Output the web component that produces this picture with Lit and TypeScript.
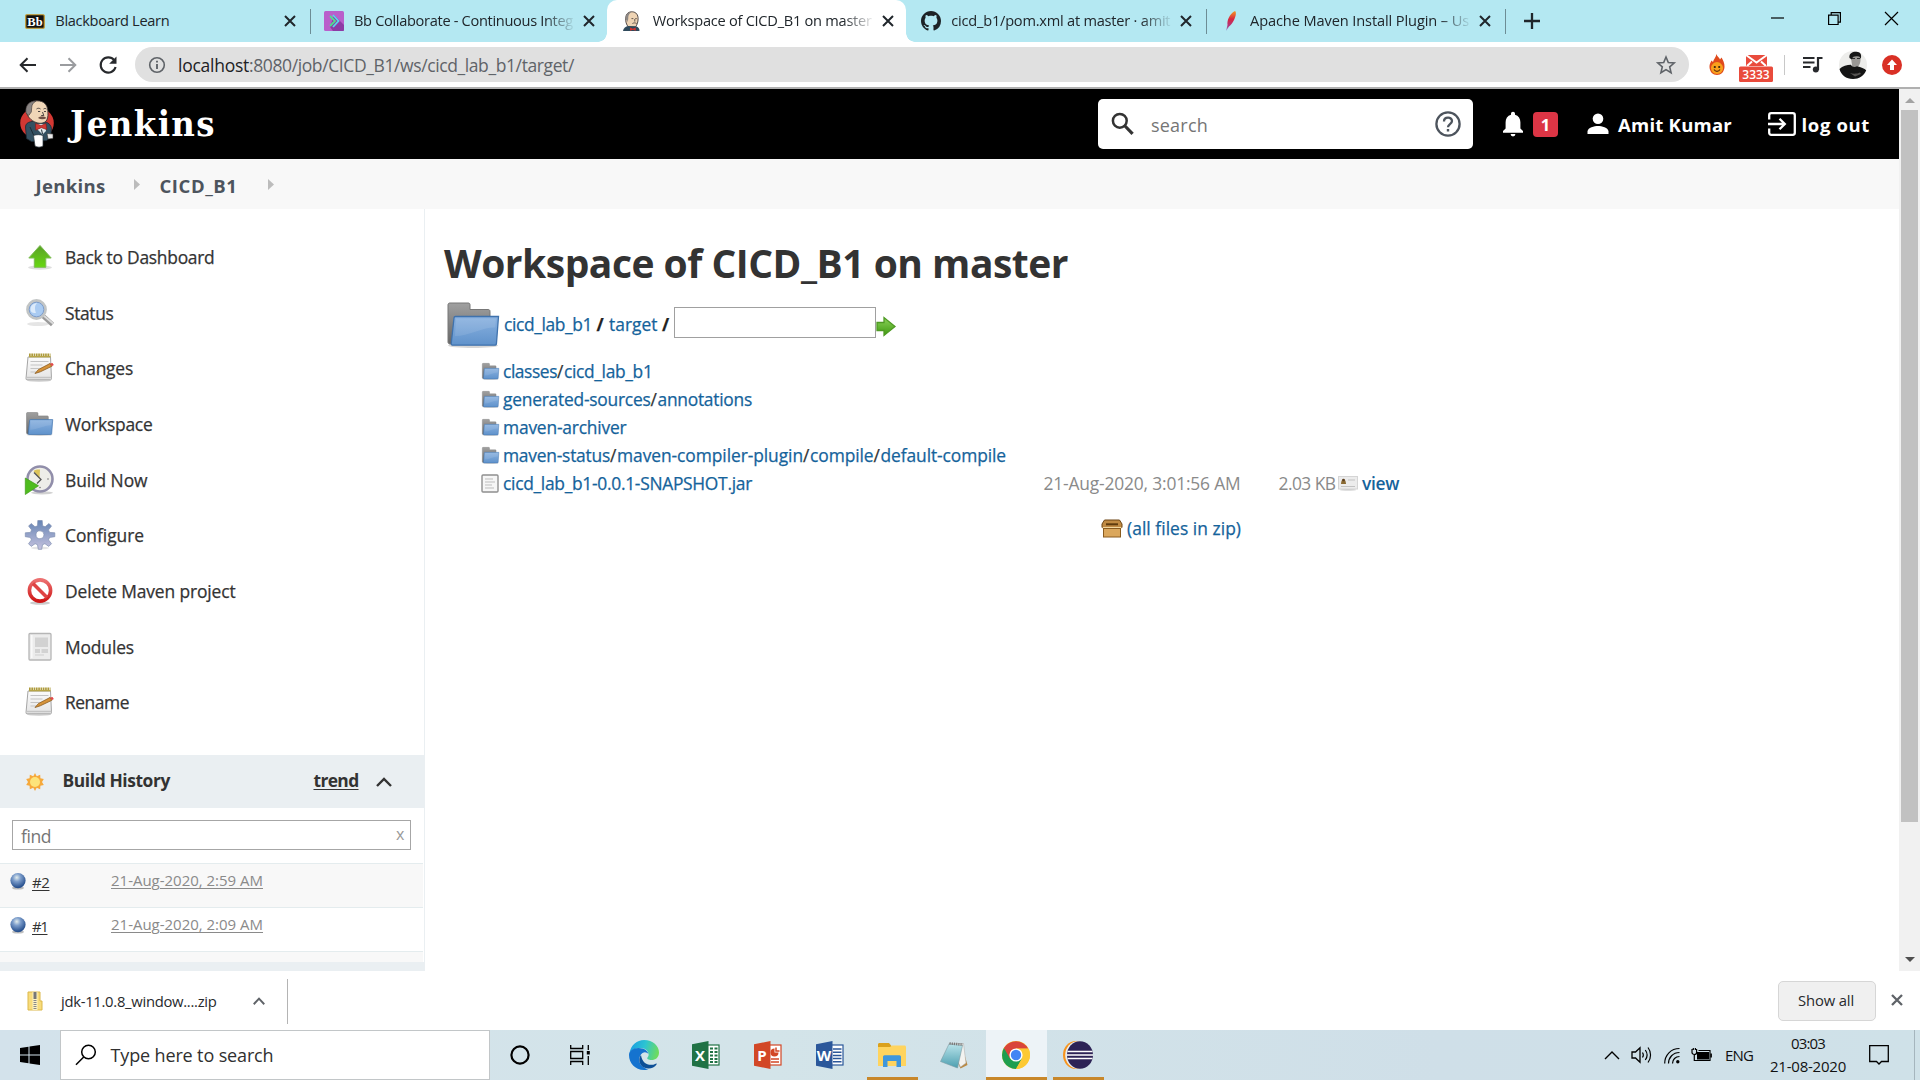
import { LitElement, html, css, svg, nothing } from "lit";
import { customElement, property } from "lit/decorators.js";
import { classMap } from "lit/directives/class-map.js";

/* Single line of text spaced out to an exact width. */
@customElement("fit-text")
class FitText extends LitElement {
  @property() text = "";
  @property({ type: Number }) w = 0;
  static styles = css`
    :host { display: inline-block; white-space: pre; }
    .line { display: inline-block; text-decoration: inherit; text-underline-offset: inherit; }
  `;
  firstUpdated() {
    const line = this.renderRoot.querySelector(".line") as HTMLElement;
    const gap = (this.w - line.getBoundingClientRect().width) / this.text.length;
    line.style.letterSpacing = `${gap.toFixed(3)}px`;
    this.style.width = `${this.w}px`;
  }
  render() {
    return html`<span class="line">${this.text}</span>`;
  }
}

const t = (text: string, w: number, cls = "") => html`<fit-text class=${cls} .text=${text} .w=${w}></fit-text>`;
const icon = (w: number, h: number, body: unknown, vb = `0 0 ${w} ${h}`) =>
  html`<svg width=${w} height=${h} viewBox=${vb} preserveAspectRatio="none">${body}</svg>`;

/* ---------- pictograms ---------- */
const cross = (s: number, color: string, sw: number) =>
  icon(s, s, svg`<path d="M1 1 11 11M11 1 1 11" fill="none" stroke=${color} stroke-width=${sw}/>`, "0 0 12 12");

const butlerHead = svg`
  <path d="M4 7C4 2 8 .6 11 .8c4 .3 6 3 6 7 0 3-1 6-2.600 8L7 16C4.500 14 3.500 10 4 7z" fill="#efd4b4" stroke="#3c3432" stroke-width=".9"/>
  <path d="M4 8c-.5-4 2-7 6-7.200C7 3 6.500 5 6.600 8l-1 3z" fill="#8b8785"/>
  <path d="M10 7.600h2M14 7.600h1.600M13.500 8v2.600M11 12.500c1.500-.8 3-.8 4.500 0" stroke="#3c3432" stroke-width=".8" fill="none"/>
  <path d="M1 20c.5-3 3-4.500 5.500-5l9 .5c2 .5 3 2.500 3 4.500z" fill="#2f4a5c"/>
  <path d="M8.500 16.500l3 1.200 3-1.200v3.200l-3-1-3 1z" fill="#d6322d"/>`;

const favBb = icon(20, 15, svg`<rect x=".75" y=".75" width="18.500" height="13.500" rx="1" fill="#111" stroke="#c99a2c" stroke-width="1.200"/><text x="10" y="12" text-anchor="middle" class="bb">Bb</text>`);
const favCollab = icon(20, 20, svg`<rect width="20" height="20" rx="1.500" fill="#b95fcb"/><path d="M10 4l10 10v4.500c0 1-.5 1.500-1.500 1.500H9l-3-4z" fill="#8d3ba5"/><path d="M6 5l5 5-5 5" fill="none" stroke="#4fe08c" stroke-width="1.800"/><path d="M9 4l5.500 6L9 16" fill="none" stroke="#58d6ee" stroke-width="1.800"/>`);
const favButler = icon(18, 20, butlerHead, "0 0 19 20");
const favGithub = icon(20, 20, svg`<path fill="#1d2226" d="M8 0C3.580 0 0 3.580 0 8c0 3.540 2.290 6.530 5.470 7.590.4.070.550-.170.550-.380 0-.190-.010-.820-.010-1.490-2.010.370-2.530-.490-2.690-.940-.090-.230-.480-.940-.820-1.130-.280-.150-.680-.520-.010-.530.630-.010 1.080.580 1.230.820.720 1.210 1.870.870 2.330.660.070-.520.280-.870.510-1.070-1.780-.2-3.640-.890-3.640-3.950 0-.870.310-1.590.820-2.150-.080-.2-.360-1.020.080-2.120 0 0 .670-.210 2.200.820.640-.180 1.320-.270 2-.270s1.360.090 2 .270c1.530-1.040 2.200-.820 2.200-.820.440 1.100.160 1.920.080 2.120.510.560.820 1.270.820 2.150 0 3.070-1.870 3.750-3.650 3.950.290.250.540.730.540 1.480 0 1.070-.010 1.930-.010 2.200 0 .210.150.460.550.380A8.010 8.010 0 0 0 16 8c0-4.420-3.580-8-8-8z"/>`, "0 0 16 16");
const favFeather = icon(20, 20, svg`<defs><linearGradient id="fe" x1="0" y1="0" x2="0" y2="1"><stop offset="0" stop-color="#f59a23"/><stop offset=".4" stop-color="#d8263f"/><stop offset=".75" stop-color="#b0367f"/><stop offset="1" stop-color="#8c9fd8"/></linearGradient></defs><path d="M15 0c1.500 1 1 5-1 9-1.400 2.800-3 5-5 6.500L6 20l1.500-6C7 10 9 3 15 0z" fill="url(#fe)"/>`);

const fwd = (color: string) => icon(18, 18, svg`<path d="M1 9h15M9.500 2.200 16.300 9l-6.800 6.800" fill="none" stroke=${color} stroke-width="2"/>`);
const back = icon(18, 18, svg`<path d="M17 9H2M8.500 2.200 1.700 9l6.800 6.800" fill="none" stroke="#27292c" stroke-width="2"/>`);
const reload = icon(20, 20, svg`<path d="M16.200 5.200A7.600 7.600 0 1 0 17.600 12" fill="none" stroke="#27292c" stroke-width="2.100"/><path d="M18.500 1.500v7.300h-7.300z" fill="#27292c"/>`);
const info = icon(18, 18, svg`<circle cx="9" cy="9" r="7.300" fill="none" stroke="#5f6368" stroke-width="1.600"/><path d="M9 8v5M9 4.800v1.800" stroke="#5f6368" stroke-width="1.900"/>`);
const star = icon(20, 20, svg`<path d="M10 2l2.300 5.500 5.900.5-4.500 3.900 1.400 5.800L10 14.600l-5.100 3.100 1.400-5.800L1.800 8l5.900-.5z" fill="none" stroke="#5f6368" stroke-width="1.600"/>`);
const flame = icon(16, 22, svg`<path d="M7.500 0c.5 2.500 3 3.500 3.500 5.500l1.500-2c1.500 2.500 3.200 5.500 3 9.500-.3 5-3.500 8-7.500 8S.7 18 .5 13c-.1-3 1-4.500 2-6.500L4 8c.5-3 3-4.500 3.500-8z" fill="#e04a1c"/><path d="M2 14c0-3 3-6 6-6s6 3 6 6-2.500 6-6 6-6-3-6-6z" fill="#f9a11c"/><circle cx="5.800" cy="13" r="1.100" fill="#33200e"/><circle cx="10.200" cy="13" r="1.100" fill="#33200e"/><path d="M5 15.500c1.500 2.500 4.500 2.500 6 0" stroke="#5b2a0d" stroke-width="1.200" fill="none"/>`);
const mail = icon(34, 27, svg`<path d="M7 0h21v11H7z" fill="#e94b3c"/><path d="M7 0l10.500 7.500L28 0M8 11l5-4.500M27 11l-5-4.500" fill="none" stroke="#fff" stroke-width="2"/><rect y="11.500" width="34" height="15.500" rx="1.500" fill="#e94b3c"/><text x="17" y="24" text-anchor="middle" class="count">3333</text>`);
const playlist = icon(21, 17, svg`<path d="M1 2h11.500M1 6.500h11.500M1 11h7.500" stroke="#27292c" stroke-width="2"/><path d="M16 14V2h4.500" stroke="#27292c" stroke-width="2.200" fill="none"/><circle cx="13.800" cy="13.600" r="3" fill="#27292c"/>`);
const avatar = icon(28, 28, svg`<circle cx="14" cy="14" r="14" fill="#ededeb"/><path d="M12 6.500c0-2 9-2 9.500-.5.5 5-1 9.500-4 10.500v2l-5-1.500c1-2 .5-3 .2-5z" fill="#9a9895"/><path d="M10.500 7c-1-5 3.500-6.500 7-6.300 3.500.1 5.500 2.500 4.300 7-.8-2-2-2.700-4-2.500-2.500.2-4.300.3-5 3.300z" fill="#171717"/><path d="M13 7.500h3M18 7.500h3" stroke="#2a2a2a" stroke-width="1"/><path d="M.5 18c3-3 7.500-4 11.500-4.200 1 2.200 3.500 3 6 1.500 4 .8 7.500 2.200 9.200 4C25 25 20 28 14 28 7 28 2 24 .5 18z" fill="#141414"/><path d="M11 22c3 1 7 1 10-.5l1 1.500-6 2.500z" fill="#565452"/>`);
const upRed = icon(20, 20, svg`<circle cx="10" cy="10" r="10" fill="#d93025"/><path d="M10 4.500l5 5.500h-3v5H8v-5H5z" fill="#fff"/>`);

const butler = icon(34, 48, svg`
  <ellipse cx="17" cy="23" rx="16.800" ry="15.500" fill="#d33833"/>
  <path d="M5.500 27c0-3 2-4.500 5-5.200l4-.8 11 1c3.500.800 5.500 3.500 6 6.500l-1 9-4 3-15 1-5-3z" fill="#335061" stroke="#1d2b35" stroke-width=".8"/>
  <path d="M16 24h9l1 7-3.500 3.500L17 29z" fill="#dfe8ec"/>
  <path d="M6.500 12C5.500 5 10 .9 17 .8c7 0 10.300 4 10.800 9.500.3 4 .4 7-1 9.700-1.700 3-5.500 3.800-9 3-4.500-1-10.300-5-11.300-11z" fill="#f0d6b7" stroke="#3b3434" stroke-width=".9"/>
  <path d="M6 13C5 6 8.500 1.200 16 .9c-3 2-4.300 4-4.300 6.800L11.300 12l-2.500 3.500z" fill="#8a8583" stroke="#3b3434" stroke-width=".6"/>
  <path d="M16.500 9c1.200-1 2.700-1 4 0M23.500 9c1-.7 2-.7 3 0M18 11.500h2.200M24 11.500h2M22.500 12l1.300 3.500h-2.600" stroke="#3b3434" stroke-width=".9" fill="none"/>
  <path d="M18 18c2.300-2 6-1.800 8.500 0-2.500 1.700-6 1.700-8.500 0z" fill="#6e4f44"/>
  <path d="M15.500 23.500l5.500 2 5-2 .8 6-5.500-1.800-5.500 2.500z" fill="#d33833" stroke="#7d1814" stroke-width=".6"/>
  <path d="M10 27l4 9M21.500 29.500l1 4.500" stroke="#1d2b35" stroke-width="1"/>
  <path d="M13.500 35.500c3-1.200 7-1 9.500 0v10.500c-2 1.500-6 1.500-8 0z" fill="#fff" stroke="#27323a" stroke-width=".7"/>
  <path d="M27 33.500l6 .5v4.500l-5 .5z" fill="#e9e9e9" stroke="#333" stroke-width=".6"/>`);

const lens = icon(24, 24, svg`<circle cx="8.800" cy="8.800" r="6.900" fill="none" stroke="#333" stroke-width="2.500"/><path d="M14 14l7.600 7.800" stroke="#333" stroke-width="3.200"/>`);
const help = icon(26, 26, svg`<circle cx="13" cy="13" r="11.600" fill="none" stroke="#4d545d" stroke-width="2.300"/><path d="M9 10.500c0-5 8-5 8-.4 0 3-4 3.200-4 6.100" fill="none" stroke="#4d545d" stroke-width="2.300"/><rect x="11.800" y="18" width="2.400" height="2.500" fill="#4d545d"/>`);
const bell = icon(22, 26, svg`<path d="M11 .8c1.200 0 2 .9 2 2v.9c3.600 1 5.400 4 5.400 7.600v6.200L21 20v1.700H1V20l2.600-2.500v-6.200C3.600 7.700 5.400 4.700 9 3.700v-.9c0-1.100.8-2 2-2zM8.600 23h4.800a2.400 2.400 0 0 1-4.800 0z" fill="#fff"/>`);
const person = icon(22, 22, svg`<circle cx="11" cy="5.800" r="5.300" fill="#fff"/><path d="M.5 21v-2.600c0-3.600 7-5.400 10.500-5.400s10.500 1.800 10.500 5.400V21z" fill="#fff"/>`);
const logout = icon(28, 24, svg`<path d="M1.200 7.500V3.200c0-1 .8-2 2-2h21.600c1.200 0 2 1 2 2v17.600c0 1-.8 2-2 2H3.200c-1.200 0-2-1-2-2v-4.300" fill="none" stroke="#fff" stroke-width="2.300"/><path d="M0 12h16M11.500 6.800 16.800 12l-5.300 5.200" fill="none" stroke="#fff" stroke-width="2.300"/>`);
const crumb = icon(6, 11, svg`<path d="M0 0l6 5.500L0 11z" fill="#bcbcbc"/>`);

const grad = (id: string, a: string, b: string) => svg`<linearGradient id=${id} x1="0" y1="0" x2="0" y2="1"><stop offset="0" stop-color=${a}/><stop offset="1" stop-color=${b}/></linearGradient>`;
const folderBody = svg`<defs>${grad("fb", "#8bb2e0", "#5f92cb")}${grad("fg", "#a0a0a0", "#666")}</defs>
  <ellipse cx="26" cy="43.500" rx="25" ry="2.500" fill="#000" opacity=".16"/>
  <path d="M1 3c0-1.500.8-2 2-2h18c1.500 0 2 .6 2 2v4.500h18c1.200 0 2 .6 2 1.800V42H3c-1.200 0-2-.8-2-2z" fill="url(#fg)" stroke="#777" stroke-width="1"/>
  <path d="M8.500 14.500h43L49.500 41c0 1.500-.8 2.200-2 2.200H6c-1.400 0-1.900-.9-1.700-2.200L7 16c0-1 .5-1.500 1.500-1.500z" fill="url(#fb)" stroke="#3f72ad" stroke-width="1.300"/>
  <path d="M9 16.500h40l-.8 9C36 25 22 34 8 34z" fill="#fff" opacity=".1"/>`;
const folder = (w: number, h: number) => icon(w, h, folderBody, "0 0 52 46");

const icUp = icon(30, 30, svg`<defs>${grad("gu", "#5aa02a", "#67d810")}</defs><ellipse cx="15" cy="25.500" rx="12" ry="2.200" fill="#000" opacity=".13"/><path d="M15 3.500 26.200 16h-5.400v9.300H9.300V16H3.800z" fill="url(#gu)" stroke="#7cbc54" stroke-width="1"/>`);
const icStatus = icon(30, 30, svg`<ellipse cx="13" cy="26" rx="11" ry="2" fill="#000" opacity=".1"/><path d="M18 18 27.500 26.500" stroke="#9a9a9a" stroke-width="4.600"/><path d="M18.500 17.500 28 25.500" stroke="#dcdcdc" stroke-width="1.800"/><circle cx="11.500" cy="11.500" r="9" fill="#a9cbf2" stroke="#c2c5c5" stroke-width="2.800"/><circle cx="11.500" cy="11.500" r="7.300" fill="none" stroke="#7f9dc9" stroke-width="1"/><path d="M5.500 11.500c0-4 3-6.500 7-6.200-3 1-3 6-1.500 9.500-3 .7-5.500-.5-5.500-3.300z" fill="#dcebfb"/>`);
const icPad = icon(30, 30, svg`<defs>${grad("gp", "#fbfbfb", "#e4e4e4")}</defs><ellipse cx="14" cy="27.500" rx="12" ry="1.500" fill="#000" opacity=".15"/><path d="M3 4h22.500l1 21.500c0 .8-.3 1.300-1 1.300H2c-.8 0-1-.5-1-1.300z" fill="url(#gp)" stroke="#a5a5a5" stroke-width="1"/><path d="M1.500 24.500h25" stroke="#c4c4c4" stroke-width="1.500"/><path d="M4 2.300h21.500" stroke="#ad9a3b" stroke-width="3.400" stroke-dasharray="1.700 .6"/><path d="M4 3.700h21.500" stroke="#b7a547" stroke-width="1.400"/><path d="M5.500 8.500h18M5.500 12h12M5.500 15.500h9M5.500 19h6" stroke="#c3c3c3" stroke-width="1.200"/><path d="M10 20.500l3.500-4L25 10.500l1.800 2.800-11.500 5.500z" fill="#d6933a" stroke="#8a5a1d" stroke-width=".8"/><path d="M25 10.500l2.500-.6 1.300 2-2 1.400z" fill="#e24a4a"/>`);
const icBuild = icon(30, 30, svg`<ellipse cx="17" cy="27.800" rx="11" ry="1.600" fill="#000" opacity=".18"/><circle cx="15" cy="14" r="12.500" fill="#eeeee9" stroke="#918eaa" stroke-width="2.600"/><path d="M14.500 13.500 8.500 6c2-1.500 4.500-1.800 6.500-1.500z" fill="#dcc45a"/><path d="M9 7.500l7 7-4 4" fill="none" stroke="#555" stroke-width="1.300"/><circle cx="23" cy="14" r=".8" fill="#777"/><circle cx="15" cy="22.500" r=".8" fill="#777"/><path d="M.3 13 13.500 20.800.3 29.500z" fill="#4fbc1e" stroke="#3e9a18" stroke-width=".7"/>`);
const icGear = icon(30, 30, svg`<defs>${grad("gg", "#6584b4", "#c5c2de")}</defs><ellipse cx="15" cy="28" rx="9" ry="1.500" fill="#000" opacity=".1"/><path fill="url(#gg)" stroke="#7f8fb2" stroke-width=".7" fill-rule="evenodd" d="M12.800.5h4.400l.4 5.300 2.500 1L24 3.500l2.500 2.600-3 3.800 1.100 2.500 5.200.4v3.900l-5.200.7-1.100 2.500 3 3.800-2.700 2.700-3.900-2.700-2.400 1-.8 4.600h-3.400l-.8-4.600-2.400-1-3.900 2.700-2.700-2.700 3-3.800-1.100-2.500L.3 16.700v-3.900l5.200-.4 1.100-2.500-3-3.800L6.200 3.500l3.800 3.300 2.500-1zM15 10.800a4 4 0 1 0 0 8 4 4 0 1 0 0-8z"/>`);
const icDelete = icon(30, 30, svg`<defs>${grad("gd", "#ec7070", "#cf1717")}</defs><ellipse cx="15" cy="27" rx="10" ry="1.700" fill="#000" opacity=".2"/><circle cx="15" cy="14.500" r="10.600" fill="#fff" fill-opacity=".7" stroke="url(#gd)" stroke-width="3.600"/><path d="M8 7.500l14 14" stroke="#df4343" stroke-width="3.600"/>`);
const icModules = icon(30, 30, svg`<rect x="4" y="1.500" width="22" height="26.500" rx="1" fill="#ececec" stroke="#b6b6b6" stroke-width="1.300"/><path d="M10 5.500h13v9.500H10zM10 17h5v4h-5zM16.500 17H23v4h-6.500z" fill="#d2d2d2"/><path d="M10 23h9" stroke="#cfcfcf"/><path d="M6.800 3v23" stroke="#fafafa" stroke-width="1.500"/>`);
const icWork = html`<span class="wk">${folder(27, 24)}</span>`;

const sun = icon(18, 18, svg`<path d="M9 0l1.700 3.200L14.200 1.800l.2 3.400 3.400.9L16 9l1.800 2.900-3.400.9-.2 3.400-3.500-1.400L9 18l-1.700-3.200-3.500 1.400-.2-3.400-3.400-.9L2 9 .2 6.100l3.400-.9.2-3.400 3.500 1.400z" fill="#f6a93b"/><circle cx="9" cy="9" r="5" fill="#fde47a"/>`);
const ball = icon(18, 18, svg`<defs><radialGradient id="ba" cx=".42" cy=".3" r=".65"><stop offset="0" stop-color="#e2ecec"/><stop offset=".4" stop-color="#7c9dcb"/><stop offset="1" stop-color="#2a528f"/></radialGradient></defs><ellipse cx="9" cy="16" rx="6" ry="1.600" fill="#000" opacity=".25"/><circle cx="9" cy="8.600" r="7.600" fill="url(#ba)"/>`);
const go = icon(20, 21, svg`<defs>${grad("go", "#8cd25a", "#3f9a10")}</defs><path d="M1 6.500h7V1.500L19 10.500 8 19.500v-5H1z" fill="url(#go)" stroke="#4f9a24" stroke-width="1.300"/>`);
const doc = icon(18, 19, svg`<rect x="1" y="1" width="16" height="17" rx="1" fill="#f6f6f6" stroke="#8f8f8f" stroke-width="1.400"/><path d="M4 5h8M4 8h10M4 11h7M4 14h9" stroke="#bdbdbd"/>`);
const viewIc = icon(20, 15, svg`<rect x=".5" y=".5" width="19" height="12.500" fill="#ececec" stroke="#d5d5d5"/><ellipse cx="10" cy="14" rx="8" ry="1" fill="#000" opacity=".12"/><path d="M3 8c0-2 1-5 2.500-5S8 6 8 8z" fill="#8a6a33"/><circle cx="5.500" cy="4" r="1.300" fill="#5c3e20"/><path d="M10 4h7M3 10.500h14" stroke="#c2c2c2" stroke-width="1.200"/>`);
const zipBox = icon(20, 19, svg`<path d="M2.500 1h15L20 5v3.500H0V5z" fill="#c08a42" stroke="#6d4514" stroke-width="1"/><path d="M4 5.300h12" stroke="#5f3b0e" stroke-width="2"/><path d="M.6 8h18.800v2H.6z" fill="#f3d7a0"/><rect x="1.500" y="9.500" width="17" height="8.500" fill="#dba75c" stroke="#8a5b1e"/>`);
const chevron = (w: number, h: number, c: string, sw: number) => icon(w, h, svg`<path d="M1 9 8 2l7 7" fill="none" stroke=${c} stroke-width=${sw}/>`, "0 0 16 10");

const zipFile = icon(16, 20, svg`<path d="M1 1h12v9h2v9H1z" fill="#f8dc7c" stroke="#dcb84a"/><path d="M5.500 1h5v18h-5z" fill="#fdf1c0"/><path d="M8 1v7" stroke="#777" stroke-width="3"/><path d="M8 9v10" stroke="#888" stroke-width="3" stroke-dasharray="1 1"/>`);

/* ---------- taskbar pictograms ---------- */
const win = icon(20, 20, svg`<path d="M0 3l8.500-1.200v7.700H0zM9.500 1.600 20 .1v9.400H9.500zM0 10.500h8.500v7.700L0 17zM9.500 10.500H20v9.400L9.500 18.400z" fill="#000"/>`);
const winSearch = icon(22, 22, svg`<circle cx="13.500" cy="8" r="6.800" fill="none" stroke="#000" stroke-width="1.500"/><path d="M8.700 13 1 20.800" stroke="#000" stroke-width="1.500"/>`);
const cortana = icon(20, 20, svg`<circle cx="10" cy="10" r="8.600" fill="none" stroke="#000" stroke-width="2.200"/>`);
const taskView = icon(20, 20, svg`<path d="M.7 0v3.500h12V0M.7 20v-3.500h12V20M.7 6.500h12v7H.7zM18.300 0v5M18.300 11v9" fill="none" stroke="#000" stroke-width="1.300"/><rect x="16.800" y="6" width="3" height="3.500" fill="#000"/>`);
const edge = icon(30, 30, svg`<defs><linearGradient id="e1" x1="0" y1=".3" x2="1" y2=".5"><stop offset="0" stop-color="#1b9de2"/><stop offset=".5" stop-color="#2cc4d2"/><stop offset="1" stop-color="#6fdc5c"/></linearGradient></defs>
  <path d="M.5 13C2 5 8 0 15 0c9 0 15 6 15 12.500 0 5-3.500 7.500-7.500 7.500-3 0-5-1-4-2.500 1-1.300 1.300-2.300 1-3.800C19 10 15 7.800 10.500 8 6 8.200 2 10 .5 13z" fill="url(#e1)"/>
  <path d="M0 15c0-4 4-7 9.500-7 5.500 0 9.500 2.800 9.800 6-1-1.800-3.800-2.500-5.800-1-4 3-4.500 9-.5 13 1.500 1.500 4 3 6.500 3.400C17 30 16 30 15 30 6 30 0 23 0 15z" fill="#1573cf"/>
  <path d="M12 15c-3 4-2 10 3 12.500 5 2.300 10 .5 12.500-3 .5-.7 0-1.200-.8-.8-6 3-13.700.3-14.700-8.700z" fill="#0d4f96"/>`);
const office = (c: string, letter: string, extra: unknown) => icon(28, 28, svg`<rect x="14" y="4" width="13" height="20" fill="#fff" stroke=${c} stroke-width="1.200"/>${extra}<path d="M0 3.200 16.500 0v28L0 24.800z" fill=${c}/><text x="8" y="20" text-anchor="middle" class="office">${letter}</text>`);
const excel = office("#207245", "X", svg`<path d="M18 7.500h3M18 11h3M18 14.500h3M18 18h3M18 21h3M22.500 7.500h3M22.500 11h3M22.500 14.500h3M22.500 18h3M22.500 21h3" stroke="#207245" stroke-width="2"/>`);
const ppt = office("#d24726", "P", svg`<path d="M20.500 7.500a4 4 0 1 0 4 4h-4z" fill="#d24726"/><path d="M22 6.500v3.500h3.500" fill="none" stroke="#d24726" stroke-width="1.500"/><path d="M17 18h8M17 21h8" stroke="#d24726" stroke-width="1.600"/>`);
const word = office("#2b579a", "W", svg`<path d="M17 8h8.500M17 11.200h8.500M17 14.400h8.500M17 17.600h8.500M17 20.800h8.500" stroke="#2b579a" stroke-width="1.500"/>`);
const explorer = icon(28, 24, svg`<path d="M0 1.500C0 .6.600 0 1.500 0H11l2.500 3H27v6H0z" fill="#dba11c"/><path d="M0 4h12l2-1.500h12.500c.900 0 1.500.6 1.500 1.500v19H0z" fill="#ffd45e"/><path d="M5 24V14c0-1 .600-1.700 1.600-1.700h14.800c1 0 1.600.7 1.600 1.700v10h-4.500v-6h-9v6z" fill="#3f97dc"/>`);
const notepad = icon(28, 28, svg`<defs>${grad("np", "#b9e3ea", "#4d9fb0")}</defs><path d="M9.500 3 22 5 27.500 24l-7 3.500z" fill="#b98a45"/><path d="M9 2.500h14.500L26 22l-5.500 4z" fill="#f3f3f0" stroke="#aaa" stroke-width=".5"/><path d="M9 3 22.500 4.500 17.500 27 .5 20.500z" fill="url(#np)" stroke="#7c9ba2" stroke-width=".6"/><path d="M9.500 2.500 23 3.500" stroke="#777" stroke-width="2.500" stroke-dasharray="1.200 1"/>`);
const chrome = icon(28, 28, svg`<circle cx="14" cy="14" r="14" fill="#fcc934"/><path d="M14 14 1.900 7a14 14 0 0 0 12.100 21l6-10.500z" fill="#1e9e4f"/><path d="M14 14 8 17.500 1.900 7a14 14 0 0 1 24.200 0.500H14z" fill="#d9453a"/><path d="M14 28a14 14 0 0 0 12.500-20.300H14l6 9.800z" fill="#fcc934"/><circle cx="14" cy="14" r="6.600" fill="#fff"/><circle cx="14" cy="14" r="5.200" fill="#4285f4"/>`);
const eclipse = icon(30, 28, svg`<ellipse cx="13" cy="14" rx="13" ry="14" fill="#f7941e"/><ellipse cx="15" cy="14" rx="12.800" ry="13.800" fill="#e8edf0"/><ellipse cx="17" cy="14" rx="13" ry="13.800" fill="#2c2255"/><path d="M4.500 10.500h25M4 14h26M4.500 17.500h25" stroke="#fff" stroke-width="1.600"/>`);
const speaker = icon(21, 18, svg`<path d="M1 6h3.500L9 1.800v14.400L4.500 12H1z" fill="none" stroke="#000" stroke-width="1.300"/><path d="M11.500 6.500c1 1.500 1 3.500 0 5M14.300 4c2.200 3 2.200 7 0 10M17 1.500c3.400 4.500 3.400 10.500 0 15" fill="none" stroke="#000" stroke-width="1.200"/>`);
const wifi = icon(16, 17, svg`<path d="M.7 16.500C.7 8 7 1.500 15.500 1.500M4.500 16.500c0-6 4.500-11 11-11M8.500 16.500c0-4 3-7 7-7" fill="none" stroke="#000" stroke-width="1.200"/><circle cx="13.800" cy="14.800" r="1.700" fill="#000"/>`);
const battery = icon(21, 14, svg`<path d="M1 1v3.500c0 1 1 2 2.300 2S5.600 5.500 5.600 4.500V1M2.300 0v2M4.400 0v2M3.300 6v6.500h3" fill="none" stroke="#000" stroke-width="1.200"/><path d="M7.500 2.500H19v10H4.500" fill="none" stroke="#000" stroke-width="1.200"/><rect x="6" y="4" width="12" height="7.500" fill="#000"/><rect x="19.300" y="5.500" width="1.600" height="4" fill="#000"/>`);
const action = icon(20, 21, svg`<path d="M.7.7h18.600v15.800H12.500L10 19l-2.500-2.500H.7z" fill="none" stroke="#000" stroke-width="1.300"/>`);

/* ---------- data ---------- */
const TABS = [
  { ic: favBb, title: "Blackboard Learn", w: 114 },
  { ic: favCollab, title: "Bb Collaborate - Continuous Integ", w: 219, fade: true, nosep: true },
  { ic: favButler, title: "Workspace of CICD_B1 on master", w: 219, fade: true, active: true, nosep: true },
  { ic: favGithub, title: "cicd_b1/pom.xml at master · amit", w: 219, fade: true },
  { ic: favFeather, title: "Apache Maven Install Plugin – Us", w: 219, fade: true },
];
const TASKS: [unknown, string, number][] = [
  [icUp, "Back to Dashboard", 149.5], [icStatus, "Status", 48.5], [icPad, "Changes", 68],
  [icWork, "Workspace", 87.5], [icBuild, "Build Now", 82.5], [icGear, "Configure", 79],
  [icDelete, "Delete Maven project", 170.5], [icModules, "Modules", 69], [icPad, "Rename", 64],
];
const DIRS: [string, number][][] = [
  [["classes", 54], ["cicd_lab_b1", 88.5]],
  [["generated-sources", 147.5], ["annotations", 94.500]],
  [["maven-archiver", 123.500]],
  [["maven-status", 107], ["maven-compiler-plugin", 186], ["compile", 63.5], ["default-compile", 125.5]],
];
const APPS = [
  { ic: edge }, { ic: excel }, { ic: ppt }, { ic: word }, { ic: explorer, run: true },
  { ic: notepad }, { ic: chrome, run: true, on: true }, { ic: eclipse, run: true },
];

@customElement("app-root")
class AppRoot extends LitElement {
  static styles = css`
    :host { display: flex; flex-direction: column; width: 1920px; height: 1080px; overflow: hidden; background: #fff; color: #333; font-family: "Open Sans", "Noto Sans", sans-serif; font-size: 17px; }
    * { box-sizing: border-box; }
    svg { display: block; flex: none; overflow: visible; }
    .bb { font: bold 12.500px "Liberation Serif", serif; fill: #fff; }
    .count { font: 600 12px "Open Sans", sans-serif; fill: #fff; }
    .office { font: bold 15px "Open Sans", sans-serif; fill: #fff; }

    .strip { display: flex; height: 42px; background: #b4e8f2; padding-left: 10px; }
    .tab { flex: none; display: flex; align-items: center; width: 298.700px; height: 42px; padding-left: 15px; position: relative; color: #20262b; font-size: 14.600px; }
    .tab > * { flex: none; }
    .tab.active { background: #fff; border-radius: 10px 10px 0 0; }
    .tab.active::before, .tab.active::after { content: ""; position: absolute; bottom: 0; width: 9px; height: 9px; }
    .tab.active::before { left: -9px; background: radial-gradient(circle at 0 0, transparent 8.500px, #fff 9px); }
    .tab.active::after { right: -9px; background: radial-gradient(circle at 100% 0, transparent 8.500px, #fff 9px); }
    .fav { width: 30.300px; display: flex; }
    .ttl { width: 220px; overflow: hidden; display: flex; line-height: 24px; margin-top: -2px; }
    .ttl.fade { -webkit-mask-image: linear-gradient(90deg, #000 190px, transparent 222px); mask-image: linear-gradient(90deg, #000 190px, transparent 222px); }
    .tab > svg { margin-left: 9px; }
    .sep { width: 1.300px; height: 25px; background: #6d8d95; margin-left: 13.500px; }
    .plus { margin: 13px 0 0 20.500px; }
    .winctl { margin-left: auto; display: flex; gap: 44px; padding: 11.500px 22.500px 0 0; }

    .toolbar { display: flex; align-items: center; height: 45px; padding-left: 19px; }
    .navs { display: flex; align-items: center; gap: 21.500px; width: 116px; }
    .omni { display: flex; align-items: center; width: 1554px; height: 35px; border-radius: 18px; background: #e0e0e0; padding: 0 13px; font-size: 17.500px; color: #5f6368; line-height: 30px; }
    .omni .host { color: #202124; margin-left: 12px; }
    .omni .star { margin-left: auto; }
    .ext { display: flex; align-items: center; padding-left: 19.500px; }
    .ext .mail { margin: 8px 0 0 14.500px; }
    .ext .bar { width: 1px; height: 20px; background: #c8c8c8; margin: 0 17px 0 11px; }
    .ext .ava { margin: 0 15px 0 16px; }
    .line { height: 2px; background: #b0b0b0; }

    .view { display: flex; height: 882px; }
    .page { width: 1899px; height: 882px; overflow: hidden; display: flex; flex-direction: column; }
    .scroll { width: 21px; background: #f1f1f1; display: flex; flex-direction: column; align-items: center; padding: 9px 0; }
    .thumb { width: 17px; height: 712px; background: #c1c1c1; margin-top: 7px; }
    .scroll .dn { margin-top: auto; }

    .head { height: 70px; flex: none; background: #000; color: #fff; display: flex; align-items: center; padding-left: 20px; font-weight: 700; font-size: 18.500px; }
    .brand { font: bold 36px "DejaVu Serif Condensed", "DejaVu Serif", serif; font-stretch: condensed; margin: -3px 0 0 16px; line-height: 46px; }
    .search { display: flex; align-items: center; width: 375px; height: 50px; border-radius: 5px; background: #fff; margin-left: 882px; padding: 0 12px 0 13px; color: #757575; font-weight: 400; font-size: 18px; }
    .search fit-text { margin: 2px 0 0 16px; line-height: 30px; }
    .search .q { margin-left: auto; }
    .head .bell { margin-left: 29px; }
    .badge { width: 25px; height: 25px; margin-left: 9px; border-radius: 4px; background: #dc3545; display: flex; align-items: center; justify-content: center; font-size: 16.500px; }
    .head .who { margin-left: 29px; }
    .head .nm { margin: 1px 0 0 9px; }
    .head .lo { margin-left: 35.500px; }
    .head .out { margin: 1px 0 0 6px; }

    .crumbs { height: 50px; flex: none; background: #f8f8f8; display: flex; align-items: center; padding-left: 35.500px; font-weight: 700; color: #4d545d; font-size: 18.500px; }
    .crumbs fit-text { margin-top: 2px; }
    .crumbs .a1 { margin: 0 19.500px 0 28.500px; }
    .crumbs .a2 { margin-left: 30px; }

    .body { display: flex; flex: 1; min-height: 0; }
    .side { width: 425px; border-right: 1.500px solid #eaeff2; display: flex; flex-direction: column; }
    .tasks { padding: 20px 0 0 25px; height: 546px; flex: none; font-weight: 500; color: #333; font-size: 17.400px; -webkit-text-stroke: .25px #333; }
    .task { display: flex; align-items: center; height: 55.700px; gap: 10px; }
    .wk { width: 30px; display: flex; padding-left: 1px; }
    .bh { height: 53px; flex: none; background: #eaeff2; display: flex; align-items: center; padding-left: 26px; font-weight: 700; font-size: 17.400px; }
    .bh .h { margin: -4px 0 0 18.500px; }
    .bh .tr { margin: -4px 17.500px 0 143.500px; }
    .u { text-decoration: underline; text-underline-offset: 2px; text-decoration-thickness: 1.200px; }
    .find { margin: 12px 0 13px 12px; width: 399px; height: 30px; flex: none; border: 1.300px solid #a6a6a6; display: flex; align-items: center; justify-content: space-between; padding: 2px 6px 0 8px; color: #757575; font-size: 17.500px; }
    .find .x { color: #999; font-size: 16px; margin-top: -4px; }
    .row { height: 44px; flex: none; margin-right: 1px; border-top: 1px solid #e4ecee; display: flex; align-items: flex-start; padding: 8px 0 0 9px; font-size: 15px; line-height: 20px; }
    .row.alt { background: #f8f8f8; }
    .row svg { margin-top: 0; }
    .row fit-text { margin-top: -2px; }
    .row .n { margin-left: 5px; width: 79px; }
    .row .d { color: #8a8a8a; }
    .row.cut { height: 11px; }
    .foot { flex: 1; background: #eaeff2; }

    .main { padding: 28px 0 0 19px; display: flex; flex-direction: column; color: #15639b; font-weight: 500; -webkit-text-stroke: .25px; }
    h1 { margin: 0; font-size: 39px; line-height: 52px; font-weight: 700; color: #333; -webkit-text-stroke: 0; }
    .path { display: flex; align-items: flex-start; margin-top: 13px; padding-left: 3px; height: 55px; line-height: 24px; font-size: 17.400px; }
    .path > fit-text { margin-top: 9.500px; }
    .path .sl { color: #222; font-weight: 700; margin: 9.500px 4.500px 0 4.500px; width: 8px; }
    .path .c0 { margin-left: 5px; }
    .path .box { width: 202px; height: 31px; border: 1.300px solid #a0a0a0; margin: 5px 0 0 -.5px; }
    .path .go { margin-top: 14px; }
    .files { padding-left: 38px; display: flex; flex-direction: column; }
    .file { display: flex; align-items: center; height: 28px; font-size: 17.400px; }
    .file .fi { width: 21px; display: flex; }
    .file .fi.dc { margin-left: -1px; width: 22px; }
    .file .s { width: 7px; color: #333; font-weight: 400; }
    .gray { color: #8a8a8a; font-weight: 400; -webkit-text-stroke: 0; }
    .file .dt { margin-left: 291.500px; }
    .file .sz { margin: 0 2px 0 38px; }
    .file .vw { margin-left: 4.500px; font-weight: 600; -webkit-text-stroke: 0; }
    .zip { display: flex; align-items: center; gap: 5px; padding-left: 620px; height: 30px; margin-top: 16px; font-size: 17.400px; }

    .shelf { height: 59px; display: flex; align-items: center; padding-left: 27px; color: #27292c; font-size: 14.800px; }
    .shelf .nm { margin: 1px 36.500px 0 18px; }
    .shelf .bar { width: 1.300px; height: 45px; margin: 2px 0 0 21.500px; background: #b4b4b4; }
    .shelf .btn { margin-left: auto; width: 98px; height: 40px; border: 1px solid #d6d6d6; border-radius: 5px; background: #f0f0f0; display: flex; justify-content: center; align-items: center; margin-right: 15.500px; padding: 0 1px 2px 0; }
    .shelf .cl { margin: -2px 17px 0 0; }

    .task-bar { height: 50px; display: flex; background: linear-gradient(90deg, #d3e2eb, #d3e4e9 40%, #cfdfe8 75%, #cfe1e8); color: #111; }
    .start { width: 60px; display: flex; align-items: center; justify-content: center; }
    .ask { width: 430px; background: #fff; border: 1px solid #c2c6c8; display: flex; align-items: center; padding: 0 0 0 13.500px; gap: 14px; font-size: 18px; color: #303030; }
    .sys { width: 60px; display: flex; align-items: center; justify-content: center; }
    .sys + .app { margin-left: 3px; }
    .app { width: 62px; display: flex; align-items: center; justify-content: center; position: relative; }
    .app.on { background: linear-gradient(#edf3f7, #edf3f7) center / 61px 100% no-repeat; }
    .app.run::after { content: ""; position: absolute; bottom: 0; left: 5.500px; width: 51px; height: 3px; background: #c8872a; }
    .app.on::after { left: .5px; width: 61px; }
    .tray { margin-left: auto; display: flex; align-items: center; font-size: 15px; }
    .tray > * { flex: none; }
    .tray .g1 { margin-right: 11.500px; } .tray .g2 { margin-right: 12px; } .tray .g3 { margin-right: 11px; } .tray .g4 { margin-right: 13px; }
    .clock { display: flex; flex-direction: column; align-items: center; line-height: 23px; margin: 0 23px 0 17px; }
    .peek { width: 1px; height: 50px; background: #a5b5bd; margin: 0 5px 0 25px; }
  `;

  render() {
    return html`
      <div class="strip">
        ${TABS.map((b: any) => html`<div class=${classMap({ tab: true, active: !!b.active })}>
          <span class="fav">${b.ic}</span>
          <span class=${classMap({ ttl: true, fade: !!b.fade })}>${t(b.title, b.w)}</span>
          ${cross(12, "#20262b", 2)}${b.nosep ? nothing : html`<i class="sep"></i>`}
        </div>`)}
        <span class="plus">${icon(16, 16, svg`<path d="M8 0v16M0 8h16" stroke="#20262b" stroke-width="2.300"/>`)}</span>
        <div class="winctl">
          ${icon(13, 13, svg`<path d="M0 6h13" stroke="#000" stroke-width="1.200"/>`)}
          ${icon(13, 13, svg`<path d="M.6 3.200h9.500v9.300H.6zM3.200 3V.6h9.200v9.500H10" fill="none" stroke="#000" stroke-width="1.200"/>`)}
          ${icon(13, 13, svg`<path d="M0 0l13 13M13 0 0 13" stroke="#000" stroke-width="1.200"/>`)}
        </div>
      </div>
      <div class="toolbar">
        <div class="navs">${back}${fwd("#9a9c9f")}${reload}</div>
        <div class="omni">${info}${t("localhost", 71, "host")}${t(":8080/job/CICD_B1/ws/cicd_lab_b1/target/", 325)}<span class="star">${star}</span></div>
        <div class="ext">${flame}<span class="mail">${mail}</span><i class="bar"></i>${playlist}<span class="ava">${avatar}</span>${upRed}</div>
      </div>
      <div class="line"></div>
      <div class="view">
        <div class="page">
          <div class="head">
            ${butler}${t("Jenkins", 146, "brand")}
            <div class="search">${lens}${t("search", 57)}<span class="q">${help}</span></div>
            <span class="bell">${bell}</span><span class="badge">1</span>
            <span class="who">${person}</span>${t("Amit Kumar", 114, "nm")}
            <span class="lo">${logout}</span>${t("log out", 68.5, "out")}
          </div>
          <div class="crumbs">${t("Jenkins", 70)}<span class="a1">${crumb}</span>${t("CICD_B1", 78)}<span class="a2">${crumb}</span></div>
          <div class="body">
            <div class="side">
              <div class="tasks">${TASKS.map(([ic, label, w]) => html`<div class="task">${ic}${t(label, w)}</div>`)}</div>
              <div class="bh">${sun}${t("Build History", 107.5, "h")}${t("trend", 45, "tr u")}${chevron(16, 10, "#333", 2.4)}</div>
              <div class="find">${t("find", 30)}${t("x", 8, "x")}</div>
              <div class="row alt">${ball}<span class="n">${t("#2", 17.5, "u")}</span>${t("21-Aug-2020, 2:59 AM", 152, "d u")}</div>
              <div class="row">${ball}<span class="n">${t("#1", 15.5, "u")}</span>${t("21-Aug-2020, 2:09 AM", 152, "d u")}</div>
              <div class="row alt cut"></div>
              <div class="foot"></div>
            </div>
            <div class="main">
              <h1>${t("Workspace of CICD_B1 on master", 624)}</h1>
              <div class="path">${folder(52, 46)}${t("cicd_lab_b1", 88, "c0")}<span class="sl">/</span>${t("target", 48.5)}<span class="sl">/</span><span class="box"></span><span class="go">${go}</span></div>
              <div class="files">
                ${DIRS.map((d) => html`<div class="file"><span class="fi">${folder(17, 17)}</span>${d.map(([n, w], i) => html`${i ? html`<span class="s">/</span>` : nothing}${t(n, w)}`)}</div>`)}
                <div class="file"><span class="fi dc">${doc}</span>${t("cicd_lab_b1-0.0.1-SNAPSHOT.jar", 249)}${t("21-Aug-2020, 3:01:56 AM", 197, "gray dt")}${t("2.03 KB", 57, "gray sz")}${viewIc}${t("view", 37, "vw")}</div>
                <div class="zip">${zipBox}${t("(all files in zip)", 114)}</div>
              </div>
            </div>
          </div>
        </div>
        <div class="scroll">
          ${icon(10, 5, svg`<path d="M0 5 5 0l5 5z" fill="#a3a3a3"/>`)}
          <div class="thumb"></div>
          <span class="dn">${icon(10, 5, svg`<path d="M0 0h10L5 5z" fill="#505050"/>`)}</span>
        </div>
      </div>
      <div class="shelf">
        ${zipFile}${t("jdk-11.0.8_window....zip", 155.5, "nm")}${chevron(12, 8, "#5f6368", 2.6)}<i class="bar"></i>
        <span class="btn">${t("Show all", 56)}</span><span class="cl">${cross(12, "#5f6368", 2.3)}</span>
      </div>
      <div class="task-bar">
        <div class="start">${win}</div>
        <div class="ask">${winSearch}${t("Type here to search", 163)}</div>
        <div class="sys">${cortana}</div><div class="sys">${taskView}</div>
        ${APPS.map((a: any) => html`<div class=${classMap({ app: true, run: !!a.run, on: !!a.on })}>${a.ic}</div>`)}
        <div class="tray">
          <span class="g1">${chevron(16, 10, "#000", 1.4)}</span><span class="g2">${speaker}</span><span class="g3">${wifi}</span><span class="g4">${battery}</span>
          ${t("ENG", 28)}
          <div class="clock">${t("03:03", 34)}${t("21-08-2020", 76)}</div>
          ${action}<i class="peek"></i>
        </div>
      </div>`;
  }
}
